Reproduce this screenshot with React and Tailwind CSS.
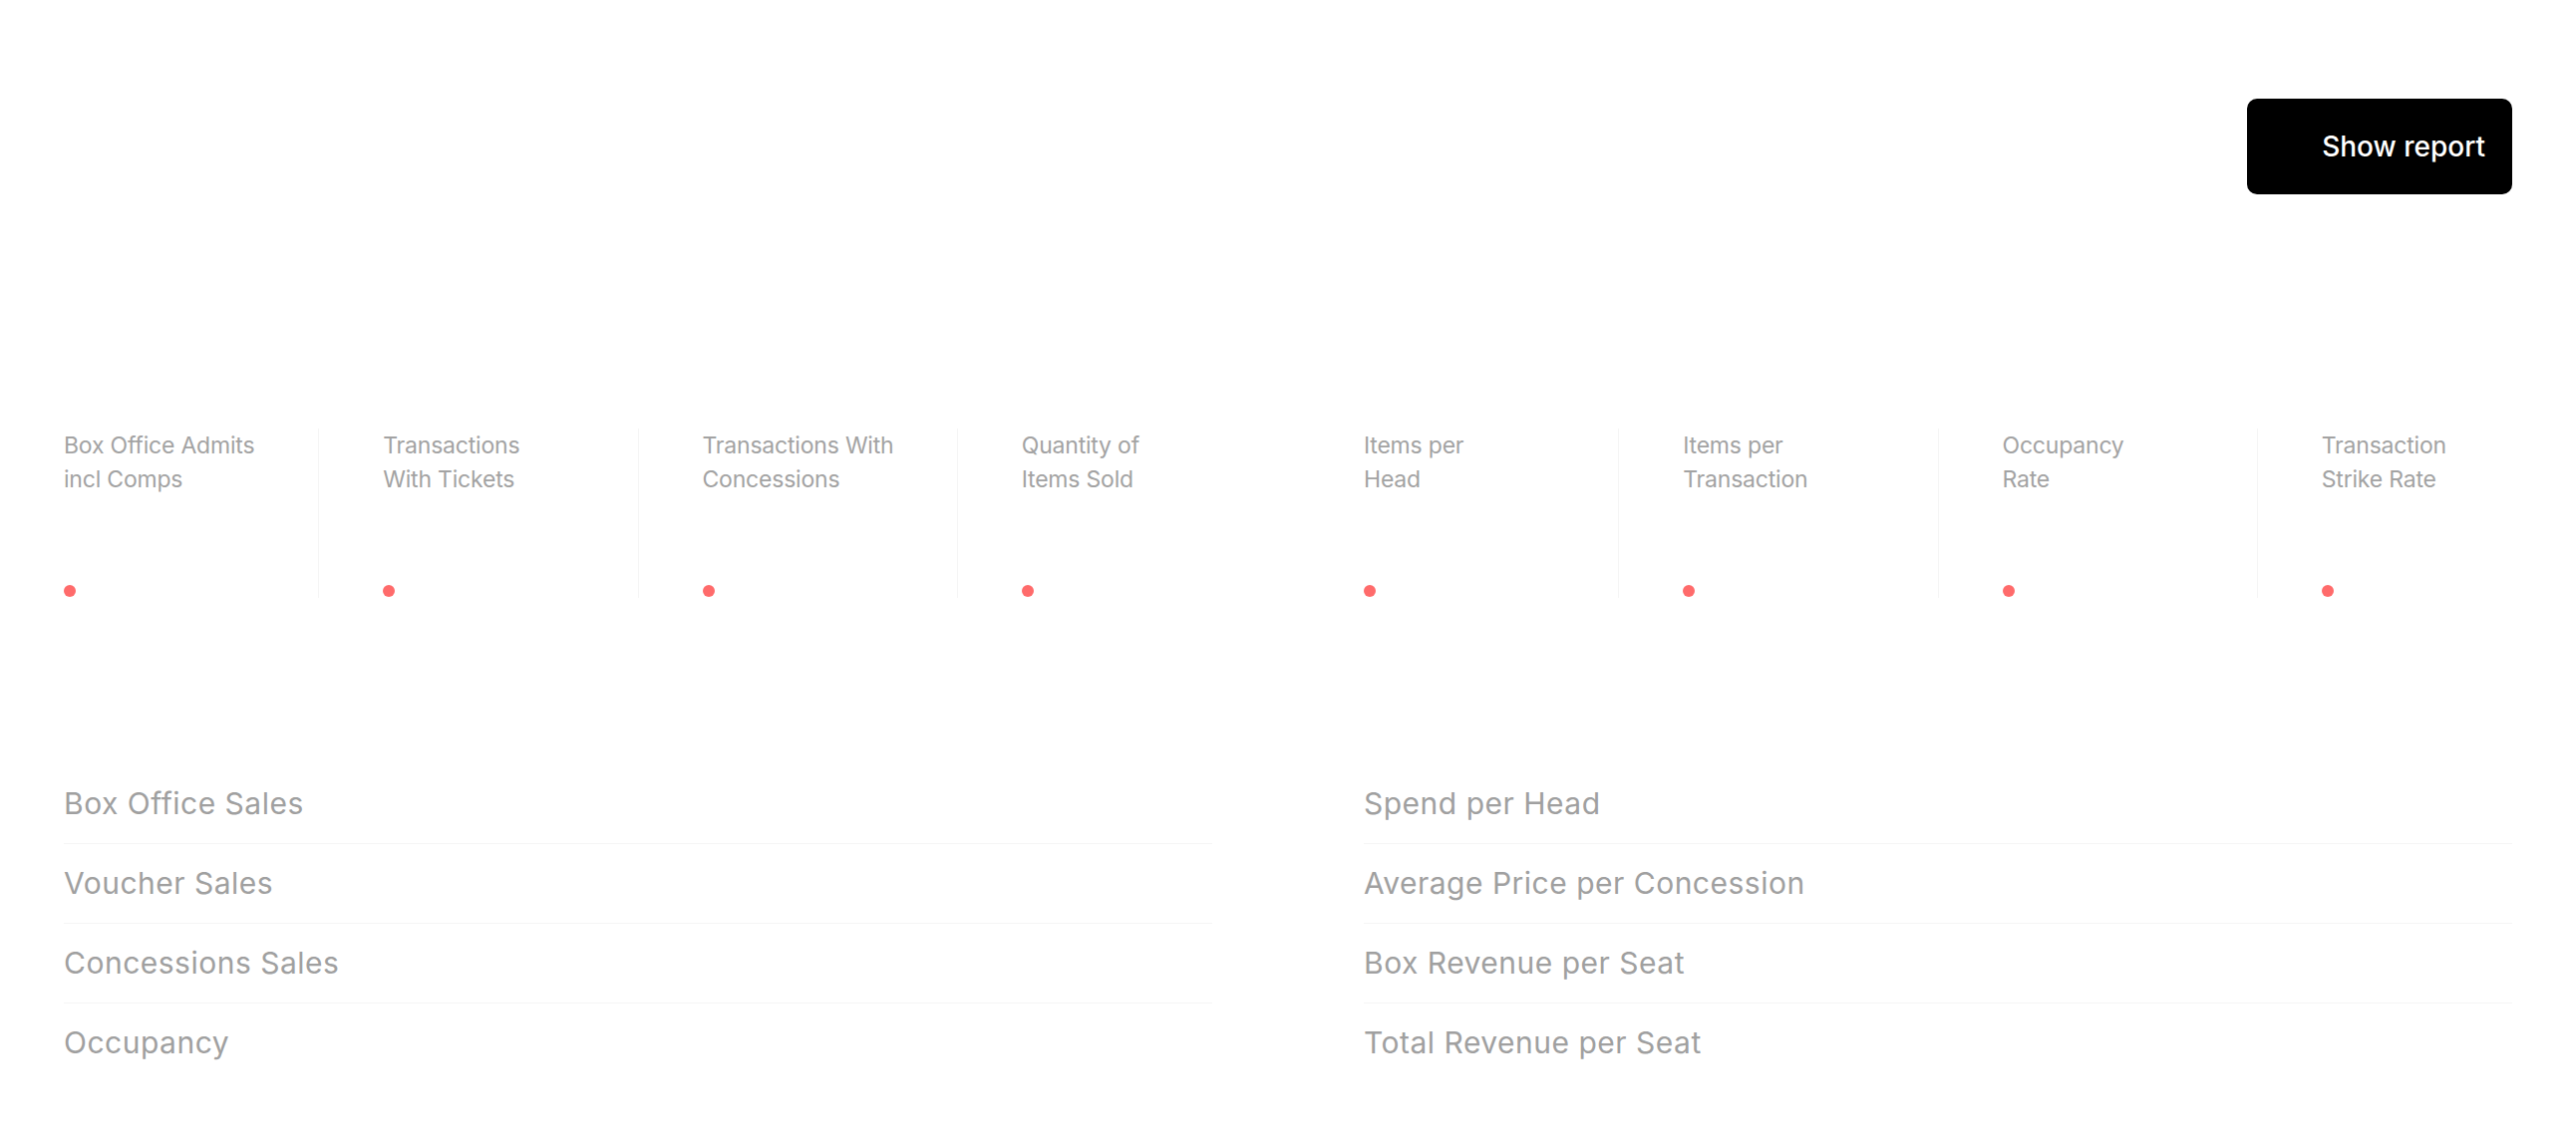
import React from 'react'

// Resumen de KPIs: cabecera con botón, fila de tarjetas de métricas y dos listas.
const metricGroups = [
  [
    ['Box Office Admits', 'incl Comps'],
    ['Transactions', 'With Tickets'],
    ['Transactions With', 'Concessions'],
    ['Quantity of', 'Items Sold'],
  ],
  [
    ['Items per', 'Head'],
    ['Items per', 'Transaction'],
    ['Occupancy', 'Rate'],
    ['Transaction', 'Strike Rate'],
  ],
]

const listColumns = [
  ['Box Office Sales', 'Voucher Sales', 'Concessions Sales', 'Occupancy'],
  ['Spend per Head', 'Average Price per Concession', 'Box Revenue per Seat', 'Total Revenue per Seat'],
]

function MetricCard({ lines }) {
  return (
    <div className="flex h-[170px] min-w-0 flex-1 flex-col justify-between border-r border-[#f5f5f5] px-16 first:pl-0 last:border-r-0 last:pr-0">
      <div className="text-[23px] leading-[34px] tracking-[-0.2px] text-[#a3a3a3]">
        {lines.map((l) => (
          <span key={l} className="block whitespace-nowrap">
            {l}
          </span>
        ))}
      </div>
      <span className="mb-px block h-3 w-3 rounded-full bg-[#ff6b6b]" />
    </div>
  )
}

export default function App() {
  return (
    <div className="min-h-screen bg-white px-16 font-['Inter','Liberation_Sans',sans-serif]">
      <div className="flex justify-end pt-[99px]">
        <button className="flex h-[96px] w-[266px] items-center justify-end rounded-[10px] bg-black pr-[27px] text-[28px] font-medium text-white">
          Show report
        </button>
      </div>

      <div className="mt-[235px] grid grid-cols-2 gap-x-[152px]">
        {metricGroups.map((group, gi) => (
          <div key={gi} className="flex">
            {group.map((lines) => (
              <MetricCard key={lines.join(' ')} lines={lines} />
            ))}
          </div>
        ))}
      </div>

      <div className="mt-[167px] grid grid-cols-2 gap-x-[152px]">
        {listColumns.map((rows, ci) => (
          <div key={ci} className="flex flex-col">
            {rows.map((r) => (
              <div
                key={r}
                className="border-b border-[#f5f5f5] py-5 text-[30px] leading-[39px] tracking-[0.5px] text-[#a0a0a0] last:border-b-0"
              >
                {r}
              </div>
            ))}
          </div>
        ))}
      </div>
    </div>
  )
}
